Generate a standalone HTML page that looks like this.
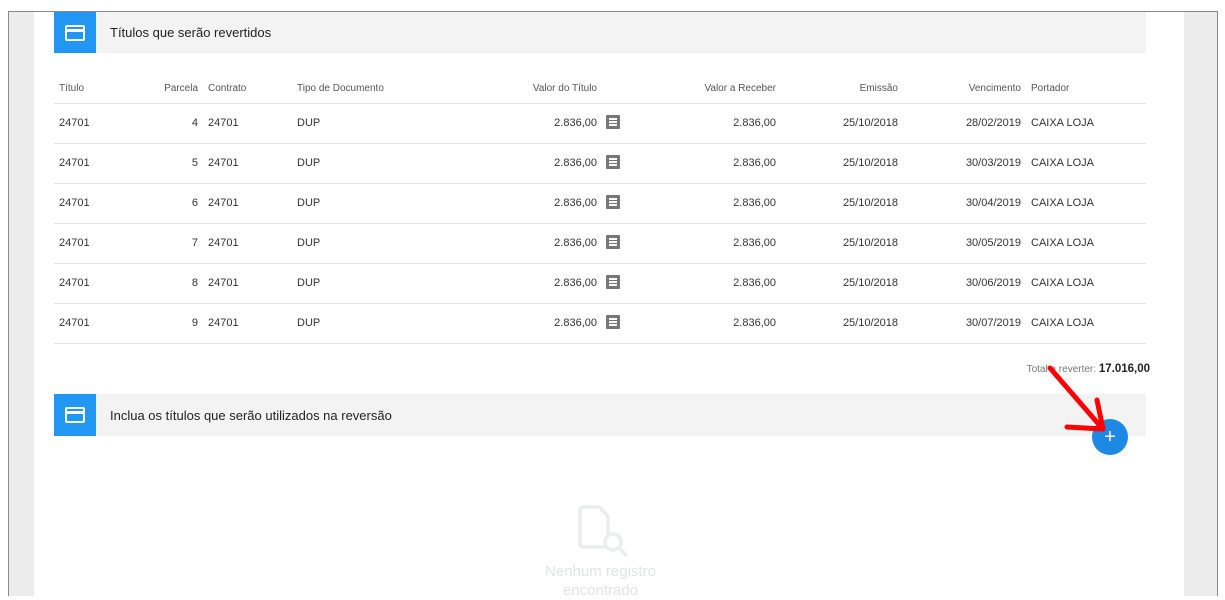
<!DOCTYPE html>
<html><head><meta charset="utf-8"><style>
*{margin:0;padding:0;box-sizing:border-box}
body{width:1225px;height:598px;background:#fff;font-family:"Liberation Sans",sans-serif;position:relative;overflow:hidden;color:#333}
.frame{position:absolute;left:8px;top:11px;width:1210px;height:585px;border:1px solid #8a8a8a;border-bottom:none;background:#ececec}
.content{position:absolute;left:34px;top:12px;width:1150px;height:586px;background:#fff}
.hdr{position:absolute;left:54px;width:1092px;height:42px;background:#f3f3f3}
.hdr .ic{position:absolute;left:0;top:0;width:42px;height:42px;background:#2196f3}
.hdr .ic:before{content:"";position:absolute;left:11px;top:13px;width:20px;height:16px;border:2px solid #fff;border-radius:2px;box-sizing:border-box}
.hdr .ic:after{content:"";position:absolute;left:12px;top:17px;width:18px;height:3px;background:#fff}
.hdr .t{position:absolute;left:56px;top:14px;font-size:13px;color:#222}
.t11{position:absolute;font-size:11px;white-space:nowrap}
.th{color:#555;font-size:10px}
.line{position:absolute;left:54px;width:1092px;height:1px;background:#e5e5e5}
.doc{position:absolute;width:14px;height:14px;background:#777;border-radius:1px}
.doc i{position:absolute;left:3px;width:8px;height:1.5px;background:#fff}
</style></head><body>
<div class="frame"></div>
<div class="content"></div>
<div class="hdr" style="top:12px;height:41px"><div class="ic" style="height:41px"></div><div class="t" style="top:13px">Títulos que serão revertidos</div></div>
<div class="hdr" style="top:394px"><div class="ic"></div><div class="t">Inclua os títulos que serão utilizados na reversão</div></div>
<div id="tbl"></div>
<div class="t11" style="right:75px;top:363px;font-size:10px;color:#777">Total a reverter: <b style="color:#222;font-size:11.5px">17.016,00</b></div>
<div style="position:absolute;left:1092px;top:419px;width:36px;height:36px;border-radius:50%;background:#1e88e5;color:#fff;font-size:20px;text-align:center;line-height:36px">+</div>
<svg style="position:absolute;left:1040px;top:360px" width="70" height="75"><path d="M10 8 L62 68" stroke="#f00" stroke-width="5" stroke-linecap="round"/><path d="M27 67 L63 69 L57 40" stroke="#f00" stroke-width="5" fill="none" stroke-linecap="round" stroke-linejoin="round"/></svg>
<svg style="position:absolute;left:578px;top:505px" width="55" height="52"><path d="M5 2 h16 l9 9 v28 a3 3 0 0 1 -3 3 h-22 a3 3 0 0 1 -3 -3 v-34 a3 3 0 0 1 3 -3z" fill="none" stroke="#eceeee" stroke-width="3.5"/><circle cx="35" cy="37" r="8" fill="#fff" stroke="#eceeee" stroke-width="3.5"/><path d="M41 43 l8 8" stroke="#eceeee" stroke-width="3.5"/></svg>
<div class="t11" style="left:538px;top:562px;font-size:15px;color:#e2e4e4;text-align:center;width:125px;line-height:19px;white-space:normal">Nenhum registro encontrado</div>
<script>
var h='';
function c(x,y,txt,al,cls){h+='<div class="t11 '+(cls||'')+'" style="'+(al?'right:'+(1225-x)+'px':'left:'+x+'px')+';top:'+y+'px">'+txt+'</div>';}
var y=83;
c(59,y,'Título',0,'th');c(198,y,'Parcela',1,'th');c(208,y,'Contrato',0,'th');c(297,y,'Tipo de Documento',0,'th');c(597,y,'Valor do Título',1,'th');c(776,y,'Valor a Receber',1,'th');c(898,y,'Emissão',1,'th');c(1021,y,'Vencimento',1,'th');c(1031,y,'Portador',0,'th');
h+='<div class="line" style="top:103px"></div>';
var v=['28/02/2019','30/03/2019','30/04/2019','30/05/2019','30/06/2019','30/07/2019'];
for(var i=0;i<6;i++){var ty=117+i*40;
c(59,ty,'24701');c(198,ty,''+(4+i),1);c(208,ty,'24701');c(297,ty,'DUP');c(597,ty,'2.836,00',1);
h+='<div class="doc" style="left:606px;top:'+(ty-2)+'px"><i style="top:3px"></i><i style="top:6px"></i><i style="top:9px"></i></div>';
c(776,ty,'2.836,00',1);c(898,ty,'25/10/2018',1);c(1021,ty,v[i],1);c(1031,ty,'CAIXA LOJA');
h+='<div class="line" style="top:'+(143+i*40)+'px"></div>';}
document.getElementById('tbl').innerHTML=h;
</script>
</body></html>
